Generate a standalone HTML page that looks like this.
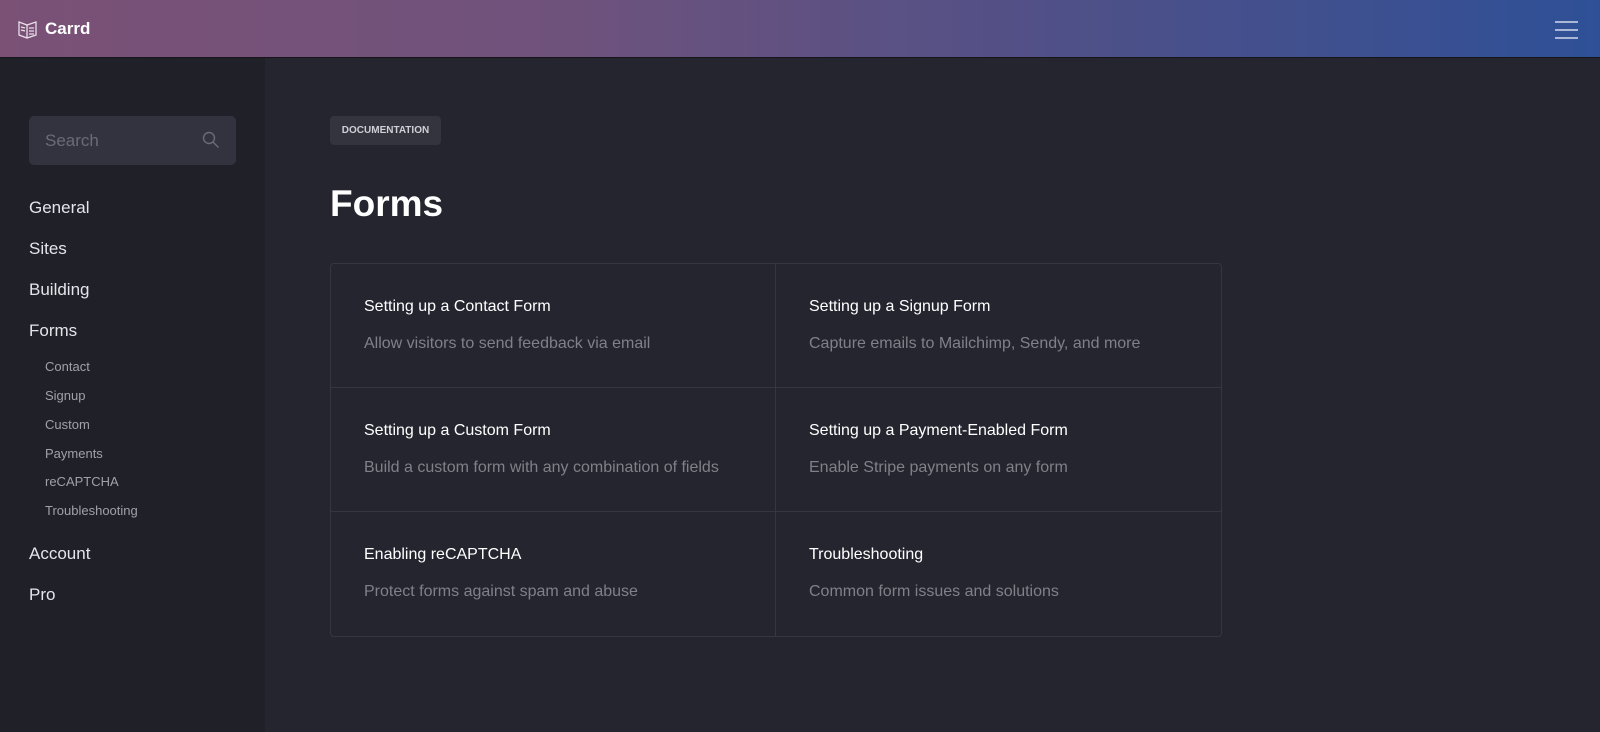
<!DOCTYPE html>
<html><head><meta charset="utf-8"><style>
*{box-sizing:border-box;margin:0;padding:0}
body{width:1600px;height:732px;overflow:hidden;background:#25252f;font-family:"Liberation Sans",sans-serif;color:#fff;position:relative}
.top{position:absolute;left:0;top:0;width:1600px;height:58px;background:linear-gradient(90deg,#7b5176 0%,#6f527c 35%,#4c5089 70%,#2f5097 100%);border-bottom:1px solid #15151a}
.logo{position:absolute;left:18px;top:19px;display:flex;align-items:center;gap:8px;font-weight:bold;font-size:17px}
.ham{position:absolute;left:1555px;top:21px;width:23px}
.ham div{height:2px;background:#a9b6d6;margin-bottom:6px}
.side{position:absolute;left:0;top:58px;width:265px;height:674px;background:#202128}
.search{position:absolute;left:29px;top:58px;width:207px;height:49px;background:#33333f;border-radius:5px;color:#6b6b77;font-size:17px;padding:15px 16px}
.search svg{position:absolute;right:16px;top:15px}
.nav{position:absolute;left:29px;font-size:17px;color:#e4e4ea}
.sub{position:absolute;left:45px;font-size:13px;color:#a0a0aa}
.badge{position:absolute;left:330px;top:116px;width:111px;height:29px;background:#34343f;border-radius:4px;font-size:10px;font-weight:bold;color:#cfcfd6;text-align:center;line-height:29px}
h1{position:absolute;left:330px;top:183px;font-size:37px;font-weight:bold}
.grid{position:absolute;left:330px;top:263px;width:892px;height:374px;border:1px solid #36363f;border-radius:4px;display:grid;grid-template-columns:1fr 1fr;grid-template-rows:1fr 1fr 1fr}
.c{padding:34px 33px 0;border-bottom:1px solid #36363f}
.c:nth-child(odd){border-right:1px solid #36363f}
.c:nth-child(n+5){border-bottom:none}
.c b{display:block;font-weight:normal;font-size:16px;color:#fff;margin-bottom:19px}
.c span{font-size:16px;color:#808089}
</style></head><body>
<div class="top">
<div class="logo"><svg width="19" height="19" viewBox="0 0 19 19" fill="none" stroke="#e8dde8" stroke-width="1.3"><path d="M1 2l8 3 9-3v13l-9 3-8-3z"/><path d="M9 5v13"/><path d="M11 8h5M11 11h5M11 14h5M3 7l4 1M3 10l4 1"/></svg>Carrd</div>
<div class="ham"><div></div><div></div><div></div></div>
</div>
<div class="side">
<div class="search">Search<svg width="18" height="18" viewBox="0 0 18 18" fill="none" stroke="#6b6b77" stroke-width="1.4"><circle cx="7" cy="7" r="5.5"/><path d="M11 11l5.5 5.5"/></svg></div>
<div class="nav" style="top:140px">General</div>
<div class="nav" style="top:181px">Sites</div>
<div class="nav" style="top:222px">Building</div>
<div class="nav" style="top:263px">Forms</div>
<div class="sub" style="top:301px">Contact</div>
<div class="sub" style="top:330px">Signup</div>
<div class="sub" style="top:359px">Custom</div>
<div class="sub" style="top:388px">Payments</div>
<div class="sub" style="top:416px">reCAPTCHA</div>
<div class="sub" style="top:445px">Troubleshooting</div>
<div class="nav" style="top:486px">Account</div>
<div class="nav" style="top:527px">Pro</div>
</div>
<div class="badge">DOCUMENTATION</div>
<h1>Forms</h1>
<div class="grid">
<div class="c"><b>Setting up a Contact Form</b><span>Allow visitors to send feedback via email</span></div>
<div class="c"><b>Setting up a Signup Form</b><span>Capture emails to Mailchimp, Sendy, and more</span></div>
<div class="c"><b>Setting up a Custom Form</b><span>Build a custom form with any combination of fields</span></div>
<div class="c"><b>Setting up a Payment-Enabled Form</b><span>Enable Stripe payments on any form</span></div>
<div class="c"><b>Enabling reCAPTCHA</b><span>Protect forms against spam and abuse</span></div>
<div class="c"><b>Troubleshooting</b><span>Common form issues and solutions</span></div>
</div>
</body></html>
